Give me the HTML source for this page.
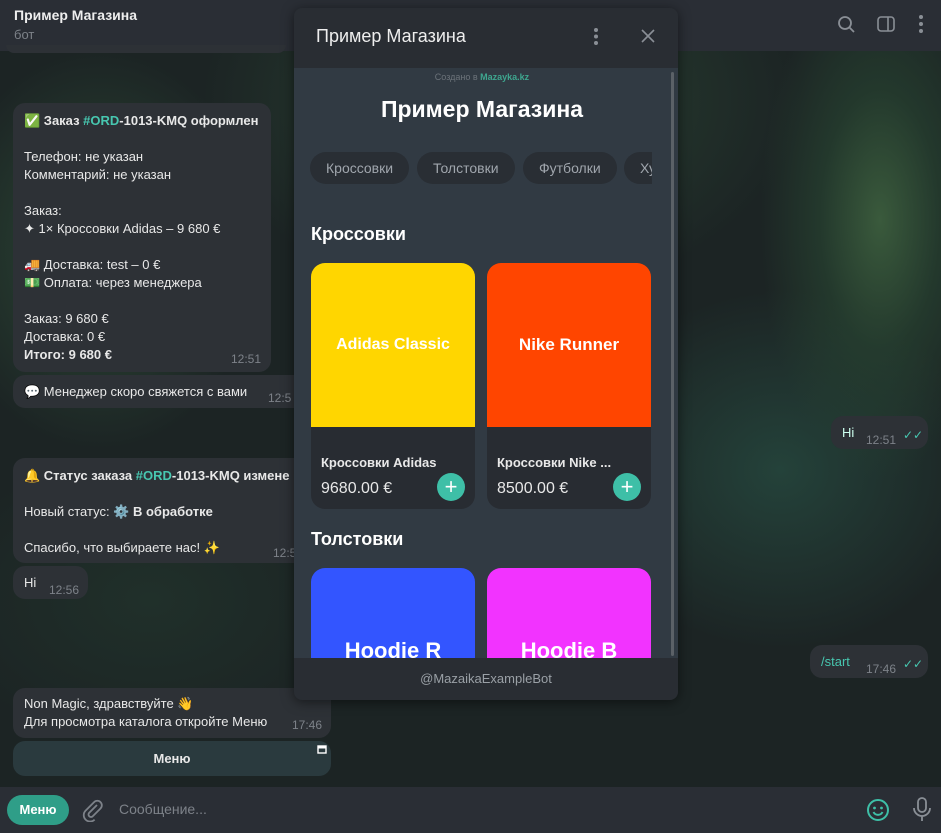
<!DOCTYPE html>
<html><head><meta charset="utf-8"><style>
*{margin:0;padding:0;box-sizing:border-box}
body{width:941px;height:833px;overflow:hidden;position:relative;font-family:"Liberation Sans","DejaVu Sans",sans-serif;font-size:13px;color:#e8e8e8;
background:
radial-gradient(ellipse 120px 260px at 880px 220px,#3a5a3c 0%,rgba(40,70,50,.6) 50%,transparent 100%),
radial-gradient(ellipse 160px 200px at 100px 250px,#2c4a36 0%,transparent 100%),
radial-gradient(ellipse 200px 180px at 780px 470px,#24423a 0%,transparent 100%),
radial-gradient(ellipse 220px 150px at 150px 600px,#20302a 0%,transparent 100%),
radial-gradient(ellipse 300px 200px at 500px 100px,#2a4433 0%,transparent 100%),
#1c2424}
.abs{position:absolute}
.top{left:0;top:0;width:941px;height:51px;background:#2a2e35}
.bub{position:absolute;background:#2d3136;border-radius:12px;padding:0 11px;line-height:18px}
.t{color:#7d8289;font-size:12px;position:absolute}
.h{color:#47c7b0}
b{font-weight:bold}
.panel{left:294px;top:8px;width:384px;height:692px;background:#292d33;border-radius:8px;overflow:hidden;box-shadow:0 2px 12px rgba(0,0,0,.5)}
.cont{position:absolute;left:0;top:60px;width:384px;height:590px;background:#313a43;overflow:hidden}
.chips{position:absolute;left:0;top:84px;width:358px;height:32px;overflow:hidden}
.chip{position:absolute;top:0;height:32px;border-radius:16px;background:#292e34;color:#a0a6ad;font-size:14px;line-height:32px;padding:0 16px;white-space:nowrap}
.card{position:absolute;width:164px;height:246px;background:#282c32;border-radius:14px;overflow:hidden}
.img{height:164px;display:flex;align-items:center;justify-content:center;color:#fff;font-size:16px;font-weight:bold}
.plus{position:absolute;right:10px;top:210px;width:28px;height:28px;border-radius:50%;background:#3ebfa7;color:#fff;font-size:22px;line-height:27px;text-align:center}
</style></head><body>
<div class="abs top">
 <div class="abs" style="left:14px;top:7px;font-weight:bold;font-size:14px;color:#eee">Пример Магазина</div>
 <div class="abs" style="left:14px;top:27px;color:#7d8289;font-size:13px">бот</div>
 <svg class="abs" style="left:836px;top:14px" width="22" height="22" viewBox="0 0 22 22"><circle cx="9" cy="9" r="6" fill="none" stroke="#8a8f96" stroke-width="1.8"/><line x1="13.5" y1="13.5" x2="18" y2="18" stroke="#8a8f96" stroke-width="1.8"/></svg>
 <svg class="abs" style="left:877px;top:15px" width="20" height="18" viewBox="0 0 20 18"><rect x="1" y="2" width="16" height="14" rx="3" fill="none" stroke="#8a8f96" stroke-width="1.6"/><line x1="11" y1="2" x2="11" y2="16" stroke="#8a8f96" stroke-width="1.6"/></svg>
 <svg class="abs" style="left:918px;top:14px" width="6" height="20"><circle cx="3" cy="3" r="2" fill="#8a8f96"/><circle cx="3" cy="10" r="2" fill="#8a8f96"/><circle cx="3" cy="17" r="2" fill="#8a8f96"/></svg>
</div>
<div class="bub" style="left:6px;top:45px;width:280px;height:8px;border-radius:0 0 10px 10px"></div>

<div class="bub" style="left:13px;top:103px;width:258px;height:269px;padding-top:9px">
<div><b>✅ Заказ <span class="h">#ORD</span>-1013-KMQ оформлен</b></div>
<div style="margin-top:18px">Телефон: не указан</div><div>Комментарий: не указан</div>
<div style="margin-top:18px">Заказ:</div><div>✦ 1× Кроссовки Adidas – 9 680 €</div>
<div style="margin-top:18px">🚚 Доставка: test – 0 €</div><div>💵 Оплата: через менеджера</div>
<div style="margin-top:18px">Заказ: 9 680 €</div><div>Доставка: 0 €</div><div><b>Итого: 9 680 €</b></div>
<span class="t" style="right:10px;bottom:4px">12:51</span></div>
<div class="bub" style="left:13px;top:375px;width:290px;height:33px;padding-top:8px;border-radius:12px 0 0 12px">💬 Менеджер скоро свяжется с вами<span class="t" style="left:255px;top:14px">12:5</span></div>

<div class="bub" style="left:13px;top:458px;width:290px;height:105px;padding-top:9px;border-radius:12px 0 0 12px">
<div><b>🔔 Статус заказа <span class="h">#ORD</span>-1013-KMQ измене</b></div>
<div style="margin-top:18px">Новый статус: ⚙️ <b>В обработке</b></div>
<div style="margin-top:18px">Спасибо, что выбираете нас! ✨</div><span class="t" style="left:260px;top:86px">12:5</span></div>
<div class="bub" style="left:13px;top:566px;width:75px;height:33px;padding-top:8px">Hi<span class="t" style="left:36px;top:15px">12:56</span></div>

<div class="bub" style="left:13px;top:688px;width:318px;height:50px;padding-top:7px">Non Magic, здравствуйте 👋<br>Для просмотра каталога откройте Меню<span class="t" style="right:9px;bottom:4px">17:46</span></div>
<div class="bub" style="left:13px;top:741px;width:318px;height:35px;background:#2a3a3e;text-align:center;line-height:35px;font-weight:bold">Меню<svg class="abs" style="right:4px;top:4px" width="10" height="9"><rect x="1" y="1" width="8" height="7" fill="none" stroke="#fff" stroke-width="1.4"/><line x1="1" y1="2.5" x2="9" y2="2.5" stroke="#fff" stroke-width="2"/></svg></div>

<div class="bub" style="left:831px;top:416px;width:97px;height:33px;padding-top:8px;color:#cfe">Hi<span class="t" style="left:35px;top:15px">12:51</span><span class="abs" style="left:72px;top:10px;color:#47c7b0;font-size:12px">✓✓</span></div>
<div class="bub" style="left:810px;top:645px;width:118px;height:33px;padding-top:8px;color:#47c7b0">/start<span class="t" style="left:56px;top:15px">17:46</span><span class="abs" style="left:93px;top:10px;color:#47c7b0;font-size:12px">✓✓</span></div>

<div class="abs" style="left:0;top:787px;width:941px;height:46px;background:#2a2e35">
 <div class="abs" style="left:7px;top:8px;width:62px;height:30px;border-radius:15px;background:#2f9e88;color:#fff;font-weight:bold;text-align:center;line-height:30px">Меню</div>
 <svg class="abs" style="left:80px;top:11px" width="24" height="24" viewBox="0 0 24 24"><path d="M17 7l-8 8a2.5 2.5 0 0 0 3.5 3.5l8-8a4.5 4.5 0 0 0-6.4-6.4l-8.5 8.5a6.3 6.3 0 0 0 9 9" fill="none" stroke="#7d8289" stroke-width="1.8"/></svg>
 <div class="abs" style="left:119px;top:14px;color:#7d8289;font-size:14px">Сообщение...</div>
 <svg class="abs" style="left:866px;top:11px" width="24" height="24"><circle cx="12" cy="12" r="10" fill="none" stroke="#3ebfa7" stroke-width="2"/><circle cx="8.5" cy="10" r="1.4" fill="#3ebfa7"/><circle cx="15.5" cy="10" r="1.4" fill="#3ebfa7"/><path d="M7.5 14a5 5 0 0 0 9 0" fill="none" stroke="#3ebfa7" stroke-width="2"/></svg>
 <svg class="abs" style="left:912px;top:10px" width="20" height="26"><rect x="6" y="1" width="8" height="14" rx="4" fill="none" stroke="#8a8f96" stroke-width="1.8"/><path d="M2 11a8 8 0 0 0 16 0M10 19v5" fill="none" stroke="#8a8f96" stroke-width="1.8"/></svg>
</div>

<div class="abs panel">
 <div class="abs" style="left:22px;top:18px;font-size:18px;color:#eee">Пример Магазина</div>
 <svg class="abs" style="left:299px;top:19px" width="6" height="20"><circle cx="3" cy="3" r="2" fill="#8a8f96"/><circle cx="3" cy="9.5" r="2" fill="#8a8f96"/><circle cx="3" cy="16" r="2" fill="#8a8f96"/></svg>
 <svg class="abs" style="left:347px;top:21px" width="14" height="14"><path d="M1 1L13 13M13 1L1 13" stroke="#8a8f96" stroke-width="1.6"/></svg>
 <div class="cont">
  <div class="abs" style="left:0;width:376px;top:4px;text-align:center;font-size:9px;color:#6c737a">Создано в <b style="color:#3ea68f">Mazayka.kz</b></div>
  <div class="abs" style="left:0;width:376px;top:28px;text-align:center;font-size:23px;font-weight:bold;color:#fff">Пример Магазина</div>
  <div class="chips">
   <div class="chip" style="left:16px">Кроссовки</div>
   <div class="chip" style="left:123px">Толстовки</div>
   <div class="chip" style="left:229px">Футболки</div>
   <div class="chip" style="left:330px">Худи</div>
  </div>
  <div class="abs" style="left:17px;top:156px;font-size:18px;font-weight:bold;color:#fff">Кроссовки</div>
  <div class="card" style="left:17px;top:195px"><div class="img" style="background:#ffd600">Adidas Classic</div>
   <div class="abs" style="left:10px;top:192px;font-weight:bold">Кроссовки Adidas</div><div class="abs" style="left:10px;top:217px;font-size:16px">9680.00 €</div><div class="plus">+</div></div>
  <div class="card" style="left:193px;top:195px"><div class="img" style="background:#ff4500;font-size:17px">Nike Runner</div>
   <div class="abs" style="left:10px;top:192px;font-weight:bold">Кроссовки Nike ...</div><div class="abs" style="left:10px;top:217px;font-size:16px">8500.00 €</div><div class="plus">+</div></div>
  <div class="abs" style="left:17px;top:461px;font-size:18px;font-weight:bold;color:#fff">Толстовки</div>
  <div class="card" style="left:17px;top:500px"><div class="img" style="background:#3355ff;font-size:22px;align-items:flex-end;height:96px">Hoodie R</div></div>
  <div class="card" style="left:193px;top:500px"><div class="img" style="background:#f233ff;font-size:22px;align-items:flex-end;height:96px">Hoodie B</div></div>
  <div class="abs" style="left:377px;top:4px;width:3px;height:584px;background:#5b6167;border-radius:2px"></div>
 </div>
 <div class="abs" style="left:0;width:384px;top:663px;text-align:center;color:#9aa0a6">@MazaikaExampleBot</div>
</div>
</body></html>
